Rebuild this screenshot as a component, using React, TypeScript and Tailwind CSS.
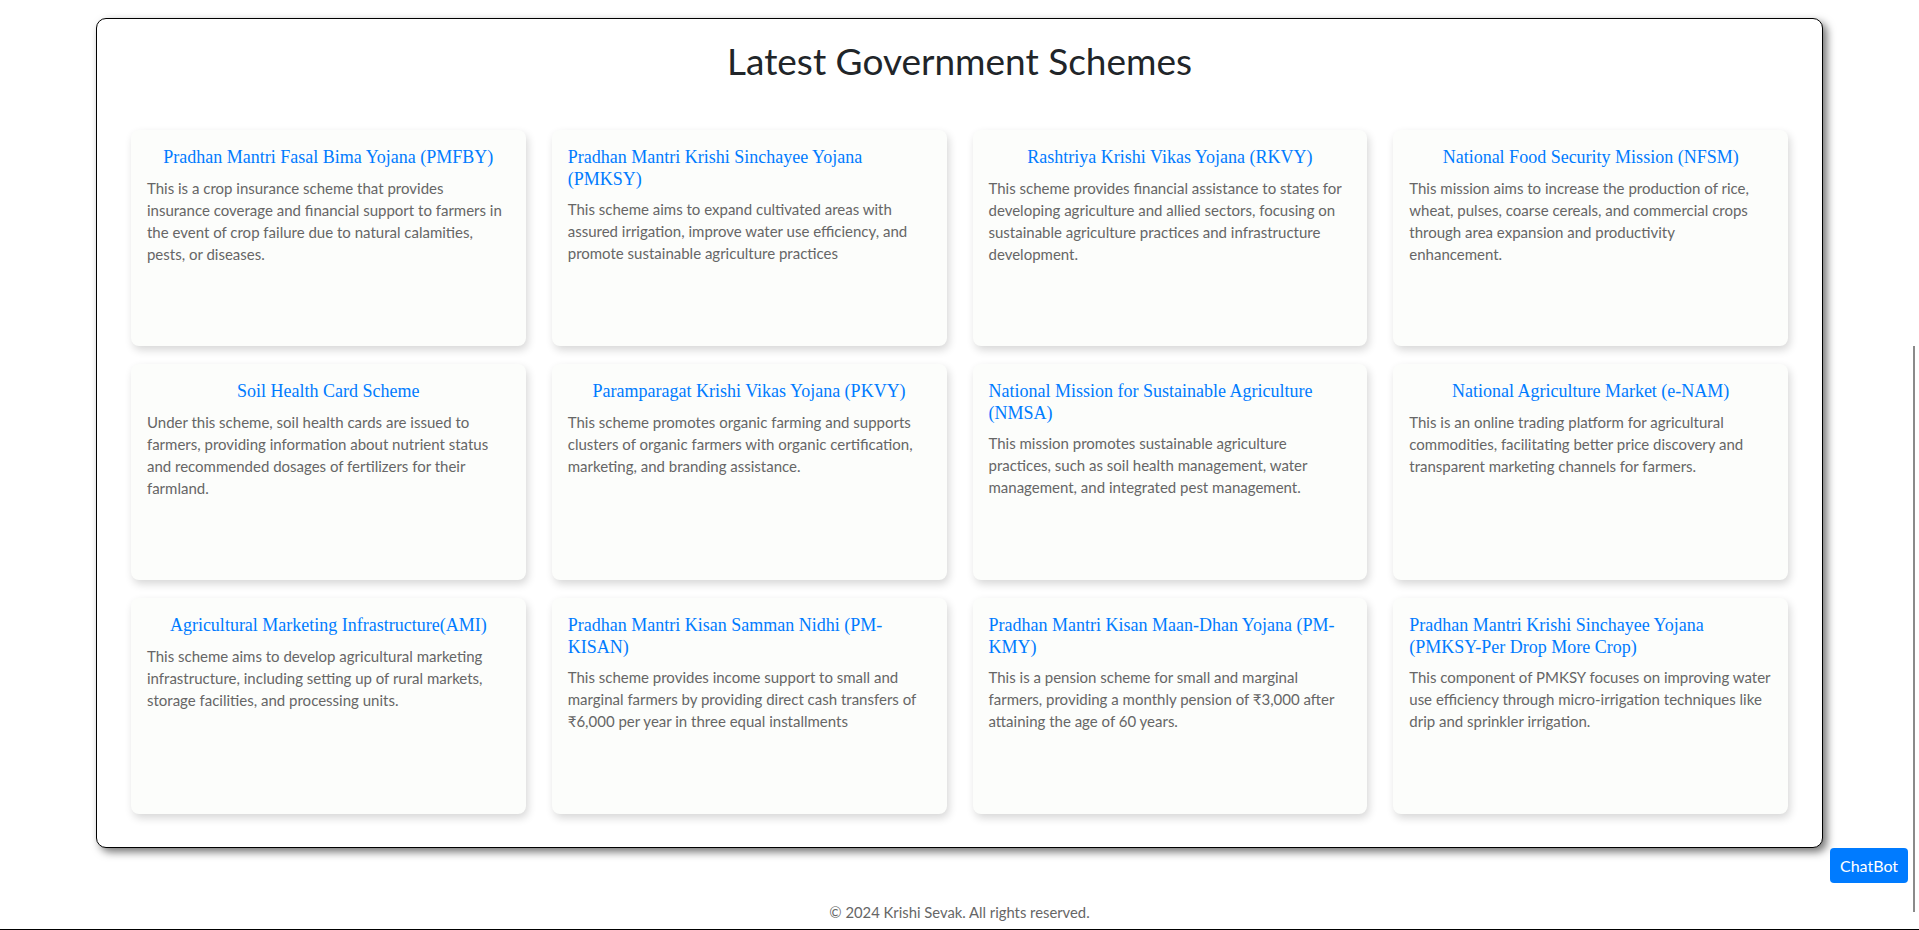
const schemes = [
  {
    title: "Pradhan Mantri Fasal Bima Yojana (PMFBY)",
    text: "This is a crop insurance scheme that provides insurance coverage and financial support to farmers in the event of crop failure due to natural calamities, pests, or diseases.",
  },
  {
    title: "Pradhan Mantri Krishi Sinchayee Yojana (PMKSY)",
    text: "This scheme aims to expand cultivated areas with assured irrigation, improve water use efficiency, and promote sustainable agriculture practices",
  },
  {
    title: "Rashtriya Krishi Vikas Yojana (RKVY)",
    text: "This scheme provides financial assistance to states for developing agriculture and allied sectors, focusing on sustainable agriculture practices and infrastructure development.",
  },
  {
    title: "National Food Security Mission (NFSM)",
    // the reference wraps the last word here
    text: "This mission aims to increase the production of rice, wheat, pulses, coarse cereals, and commercial crops through area expansion and productivity\nenhancement.",
  },
  {
    title: "Soil Health Card Scheme",
    text: "Under this scheme, soil health cards are issued to farmers, providing information about nutrient status and recommended dosages of fertilizers for their farmland.",
  },
  {
    title: "Paramparagat Krishi Vikas Yojana (PKVY)",
    text: "This scheme promotes organic farming and supports clusters of organic farmers with organic certification, marketing, and branding assistance.",
  },
  {
    title: "National Mission for Sustainable Agriculture (NMSA)",
    text: "This mission promotes sustainable agriculture practices, such as soil health management, water management, and integrated pest management.",
  },
  {
    title: "National Agriculture Market (e-NAM)",
    text: "This is an online trading platform for agricultural commodities, facilitating better price discovery and transparent marketing channels for farmers.",
  },
  {
    title: "Agricultural Marketing Infrastructure(AMI)",
    text: "This scheme aims to develop agricultural marketing infrastructure, including setting up of rural markets, storage facilities, and processing units.",
  },
  {
    title: "Pradhan Mantri Kisan Samman Nidhi (PM-KISAN)",
    text: "This scheme provides income support to small and marginal farmers by providing direct cash transfers of ₹6,000 per year in three equal installments",
  },
  {
    title: "Pradhan Mantri Kisan Maan-Dhan Yojana (PM-KMY)",
    text: "This is a pension scheme for small and marginal farmers, providing a monthly pension of ₹3,000 after attaining the age of 60 years.",
  },
  {
    title: "Pradhan Mantri Krishi Sinchayee Yojana (PMKSY-Per Drop More Crop)",
    text: "This component of PMKSY focuses on improving water use efficiency through micro-irrigation techniques like drip and sprinkler irrigation.",
  },
];

function SchemeCard({ title, text }: { title: string; text: string }) {
  return (
    <div className="h-[216px] rounded-lg bg-[#fcfdfb] px-4 pt-[17px] shadow-[2px_4px_8px_rgba(0,0,0,0.16)]">
      <h3 className="mb-2 flex justify-center font-['Liberation_Serif',serif] text-[18px] leading-[1.2] text-[#007bff]">
        <span>{title}</span>
      </h3>
      <p className="whitespace-pre-line text-[15px] leading-[22px] text-[#666]">{text}</p>
    </div>
  );
}

export default function App() {
  return (
    <div className="relative h-[930px] overflow-hidden bg-white font-['Lato','Noto_Sans',sans-serif] text-[#212529]">
      <section className="mx-auto mt-[18px] w-[90%] rounded-[10px] border border-black bg-white px-[34px] pt-[18px] pb-[33px] shadow-[4px_4px_8px_rgba(0,0,0,0.55)]">
        <h1 className="mb-[45px] text-center text-[37px] leading-[48px] font-normal">
          Latest Government Schemes
        </h1>

        <div className="grid grid-cols-4 gap-x-[26px] gap-y-[18px]">
          {schemes.map((s) => (
            <SchemeCard key={s.title} title={s.title} text={s.text} />
          ))}
        </div>
      </section>

      <footer className="mt-[54px] border-b border-black pb-[7px] text-center text-[14.8px] leading-[20px] text-[#666]">
        © 2024 Krishi Sevak. All rights reserved.
      </footer>

      <button className="fixed right-[11px] bottom-[47px] h-[35px] w-[78px] rounded-[4px] bg-[#007bff] text-[16px] text-white">
        ChatBot
      </button>

      <div className="fixed top-[346px] right-[4px] h-[566px] w-[2px] bg-[#8a8a8a]" />
    </div>
  );
}
